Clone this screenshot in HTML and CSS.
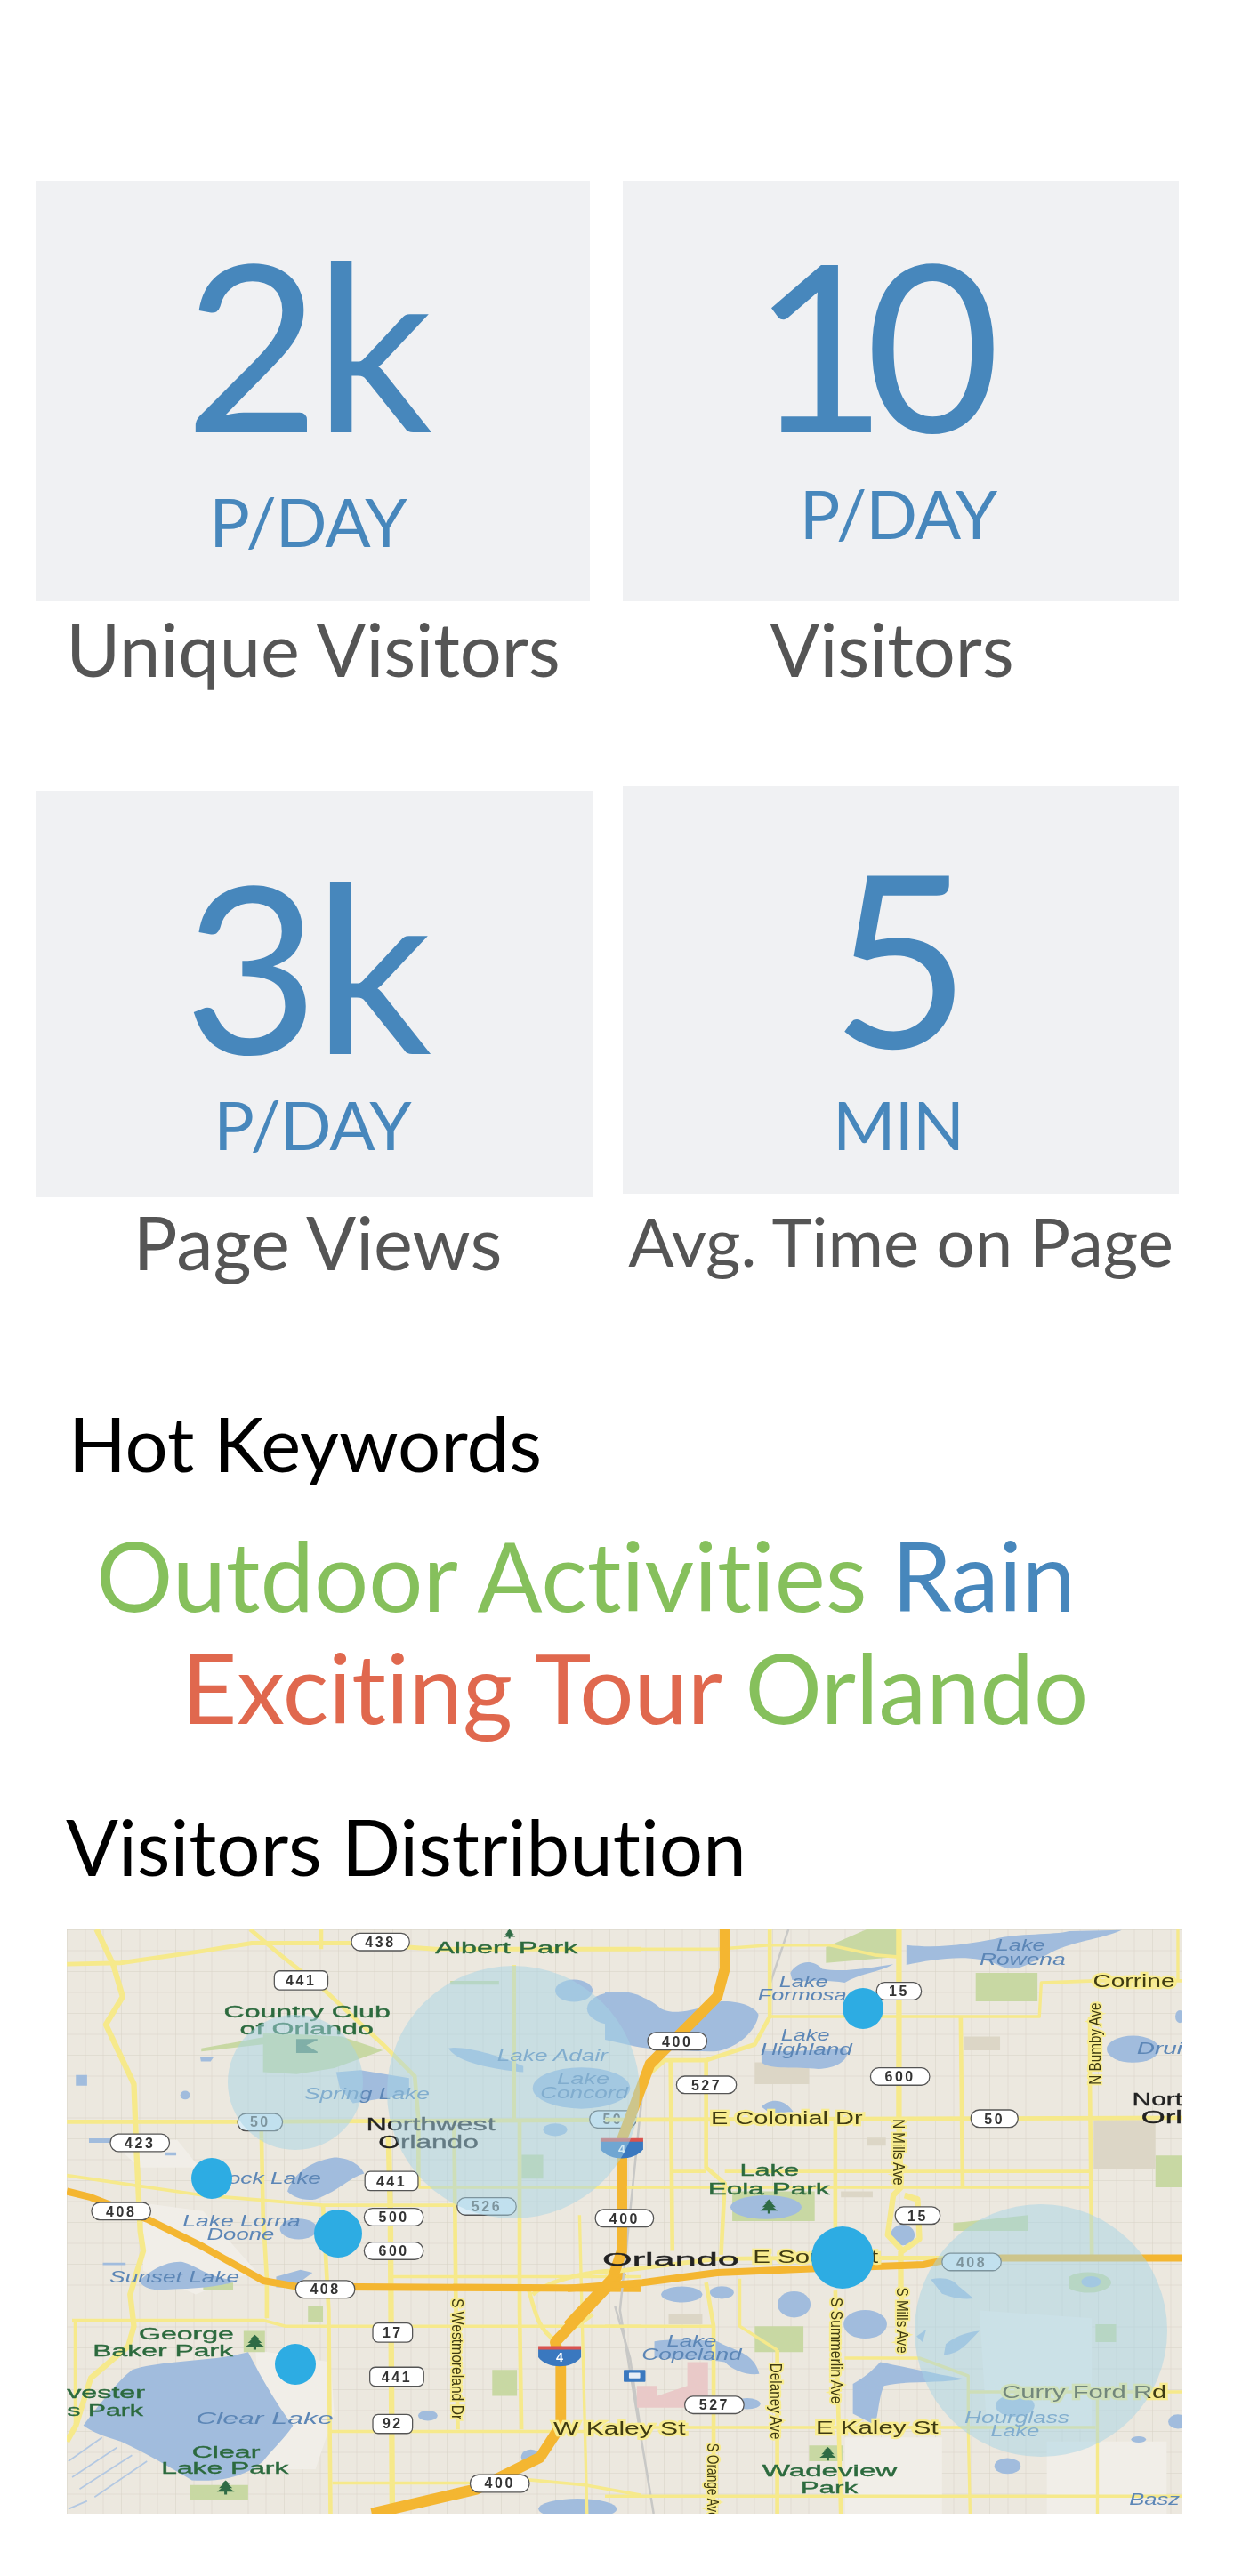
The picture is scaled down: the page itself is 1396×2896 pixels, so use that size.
FILE: index.html
```html
<!DOCTYPE html>
<html lang="en">
<head>
<meta charset="utf-8">
<title>Visitor statistics</title>
<link rel="stylesheet" href="styles.css">
</head>
<body>
<main class="page">
  <section class="stats stats-first">
    <article class="stat stat-a">
      <div class="card card-a">
        <div class="value value-two">2k</div>
        <div class="unit unit-a">P/DAY</div>
      </div>
      <p class="label">Unique Visitors</p>
    </article>
    <article class="stat stat-b">
      <div class="card card-a">
        <div class="value value-ten">10</div>
        <div class="unit unit-b">P/DAY</div>
      </div>
      <p class="label label-visitors">Visitors</p>
    </article>
  </section>
  <section class="stats stats-second">
    <article class="stat stat-c">
      <div class="card card-c">
        <div class="value value-three">3k</div>
        <div class="unit unit-c">P/DAY</div>
      </div>
      <p class="label label-views">Page Views</p>
    </article>
    <article class="stat stat-d">
      <div class="card card-d">
        <div class="value value-five">5</div>
        <div class="unit unit-min">MIN</div>
      </div>
      <p class="label label-time">Avg. Time on Page</p>
    </article>
  </section>
  <h2 class="heading heading-hot">Hot Keywords</h2>
  <div class="keywords">
    <p class="kw-line kw-one"><span class="green">Outdoor Activities</span> <span class="blue">Rain</span></p>
    <p class="kw-line kw-two"><span class="red">Exciting Tour</span> <span class="green">Orlando</span></p>
  </div>
  <h2 class="heading heading-dist">Visitors Distribution</h2>
  <div class="map">
    <svg class="map-svg" viewBox="0 0 1254 657" width="1254" height="657" role="img" aria-label="Map of Orlando with visitor circles">
      <defs>
        <pattern id="streets" width="61" height="47" patternUnits="userSpaceOnUse">
          <path class="grid" d="M0 .5H61M0 24H61M.5 0V47M21 0V47M41 0V47"/>
        </pattern>
        <symbol id="tree" viewBox="0 0 60 40" overflow="visible">
          <path class="tree" d="M30 0L42 10H37L50 22H42L56 32H34V40H26V32H4L18 22H10L23 10H18Z"/>
        </symbol>
        <g id="i4">
          <path class="i4-blue" d="M-57 -20H57V2C45 18 20 25 0 25C-20 25-45 18-57 2Z"/>
          <path class="i4-red" d="M-57 -26H57V-17H-57Z"/>
          <text class="i4-text" x="0" y="12">4</text>
        </g>
      </defs>
      <rect class="ground" width="1254" height="657"/>
      <rect class="street-grid" width="1254" height="657" fill="url(#streets)"/>

      <g class="map-base">
        <!-- west half -->
        <g transform="translate(-15 -18) scale(.4209 .4464)">
          <path class="pale" d="M240 730L400 750L540 900L380 960L240 900ZM540 1100L740 1130L750 1260L700 1400L560 1400ZM160 580L330 570L390 640L230 640Z"/>
          <path class="park" d="M560 300L770 310L880 345L750 390L650 405L560 400ZM395 340L560 312V330L395 348ZM508 1052H565V1105H508ZM365 1440H520V1478H365ZM1250 608H1308V668H1250ZM1172 1150H1238V1215H1172ZM400 930H480V950H400ZM680 990H720V1030H680ZM1060 170H1190V180H1060Z"/>
          <path class="lake" d="M80 1290C120 1240 170 1180 210 1150C280 1125 420 1130 520 1105C545 1150 590 1230 640 1290C620 1320 590 1345 560 1380C500 1430 420 1430 370 1428C320 1400 250 1360 180 1330C140 1320 100 1305 80 1290ZM625 700C640 660 680 625 750 615C790 615 820 635 830 655C790 665 770 695 700 720C670 725 640 715 625 700ZM230 925C260 900 300 875 345 878C390 890 405 915 490 925C440 945 350 945 290 948C260 950 235 940 230 925ZM755 400L820 395L950 415V455L800 478L765 440ZM1055 340C1090 330 1200 360 1255 385L1255 400C1200 395 1080 380 1055 340ZM60 407H90V434H60ZM392 362H428L420 373H394ZM95 567H158V578H95ZM297 602H328V610H297ZM595 915L660 898L692 905L640 942H595ZM132 880H193V886H132Z"/>
          <ellipse class="lake" cx="655" cy="795" rx="50" ry="26"/>
          <ellipse class="lake" cx="1410" cy="440" rx="130" ry="52"/>
          <ellipse class="lake" cx="1390" cy="195" rx="50" ry="28"/>
          <ellipse class="lake" cx="1510" cy="240" rx="85" ry="43"/>
          <ellipse class="lake" cx="1340" cy="545" rx="32" ry="16"/>
          <ellipse class="lake" cx="352" cy="458" rx="13" ry="11"/>
          <ellipse class="lake" cx="1000" cy="1265" rx="26" ry="13"/>
          <ellipse class="lake" cx="1400" cy="1500" rx="105" ry="26"/>
          <ellipse class="lake" cx="1275" cy="1370" rx="26" ry="20"/>
          <path class="swim" d="M40 1380L130 1320M50 1420L170 1345M70 1450L210 1365M110 1470L250 1380M40 1500L90 1480"/>
          <path class="road" d="M36 128L180 125L400 95L530 75L800 75L1020 90L1568 90"/>
          <path class="road-major" d="M115 40L160 130L185 210L140 280L215 430L222 600L232 800L240 850L205 960L215 1040L200 1090L100 1170L60 1290L36 1330"/>
          <path class="road" d="M525 40L600 100L720 190L880 330L965 410L975 520L975 690"/>
          <path class="road" d="M36 525H490L1568 520"/>
          <path class="road" d="M555 525L560 760L570 920L570 1020"/>
          <path class="road-thin" d="M36 660L400 710L720 735L1090 735"/>
          <path class="road-thin" d="M975 690H1568"/>
          <path class="road" d="M715 40V90M720 735L735 1000L740 1512"/>
          <path class="road-major" d="M895 560L900 760L905 1512"/>
          <path class="road" d="M1070 525L1075 1000L1080 1300M1245 525V1000L1250 1300M1230 130V520"/>
          <path class="road-thin" d="M50 1025H560L620 1040H1568M58 1030V1290M740 1305H1568M745 1435H1130M1250 1425L1420 1440L1568 1465M905 915H1568M1405 760L1425 1512"/>
          <path class="road" d="M1270 950C1290 1020 1300 1050 1340 1075M1440 1010C1400 1040 1360 1060 1340 1075M1280 960C1330 920 1440 900 1510 900"/>
          <path class="rail" d="M1500 990L1540 1120L1568 1300"/>
          <path class="hwy" d="M36 700L100 715L250 770L400 840L560 925L650 940L1568 945"/>
          <path class="hwy-wide" d="M1518 610V860"/>
          <path class="hwy-wide" d="M1520 900L1340 1080L1355 1130V1290L1300 1370L1130 1450L850 1512"/>
          <g class="lbl lbl-park">
            <text x="1020" y="100" textLength="380" lengthAdjust="spacingAndGlyphs">Albert Park</text>
            <text x="455" y="262" textLength="445" lengthAdjust="spacingAndGlyphs">Country Club</text>
            <text x="498" y="304" textLength="357" lengthAdjust="spacingAndGlyphs">of Orlando</text>
            <text x="228" y="1072" textLength="254" lengthAdjust="spacingAndGlyphs">George</text>
            <text x="105" y="1115" textLength="375" lengthAdjust="spacingAndGlyphs">Baker Park</text>
            <text x="36" y="1220" textLength="209" lengthAdjust="spacingAndGlyphs">vester</text>
            <text x="36" y="1265" textLength="204" lengthAdjust="spacingAndGlyphs">s Park</text>
            <text x="370" y="1370" textLength="182" lengthAdjust="spacingAndGlyphs">Clear</text>
            <text x="288" y="1412" textLength="340" lengthAdjust="spacingAndGlyphs">Lake Park</text>
          </g>
          <g class="lbl lbl-lake">
            <text x="670" y="468" textLength="335" lengthAdjust="spacingAndGlyphs">Spring Lake</text>
            <text x="1185" y="373" textLength="295" lengthAdjust="spacingAndGlyphs">Lake Adair</text>
            <text x="1345" y="430" textLength="140" lengthAdjust="spacingAndGlyphs">Lake</text>
            <text x="1300" y="467" textLength="235" lengthAdjust="spacingAndGlyphs">Concord</text>
            <text x="420" y="680" textLength="295" lengthAdjust="spacingAndGlyphs">Rock Lake</text>
            <text x="345" y="788" textLength="315" lengthAdjust="spacingAndGlyphs">Lake Lorna</text>
            <text x="410" y="822" textLength="180" lengthAdjust="spacingAndGlyphs">Doone</text>
            <text x="150" y="930" textLength="347" lengthAdjust="spacingAndGlyphs">Sunset Lake</text>
            <text x="380" y="1285" textLength="368" lengthAdjust="spacingAndGlyphs">Clear Lake</text>
          </g>
          <g class="lbl lbl-city">
            <text x="835" y="547" textLength="345" lengthAdjust="spacingAndGlyphs">Northwest</text>
            <text x="868" y="592" textLength="267" lengthAdjust="spacingAndGlyphs">Orlando</text>
          </g>
          <text class="lbl lbl-road" transform="translate(1064 970) rotate(90)" textLength="305" lengthAdjust="spacingAndGlyphs">S Westmoreland Dr</text>
          <use href="#tree" x="1190" y="40" width="56" height="24"/>
          <use href="#tree" x="510" y="1060" width="56" height="40"/>
          <use href="#tree" x="432" y="1428" width="56" height="36"/>
          <path class="flag" d="M650 318H705L672 332L705 350H650ZM665 325V345"/>
          <g class="shield"><rect x="796" y="50" width="155" height="44" rx="22"/><text x="873" y="85">438</text></g>
          <g class="shield"><rect x="590" y="145" width="143" height="48" rx="14"/><text x="661" y="182">441</text></g>
          <g class="shield shield-blue"><rect x="492" y="504" width="120" height="44" rx="22"/><text x="552" y="538">50</text></g>
          <g class="shield"><rect x="152" y="556" width="158" height="44" rx="22"/><text x="231" y="591">423</text></g>
          <g class="shield"><rect x="102" y="728" width="158" height="44" rx="22"/><text x="181" y="763">408</text></g>
          <g class="shield"><rect x="832" y="650" width="142" height="48" rx="14"/><text x="903" y="687">441</text></g>
          <g class="shield"><rect x="830" y="743" width="158" height="44" rx="22"/><text x="909" y="778">500</text></g>
          <g class="shield"><rect x="830" y="828" width="158" height="44" rx="22"/><text x="909" y="863">600</text></g>
          <g class="shield shield-blue"><rect x="1078" y="716" width="158" height="44" rx="22"/><text x="1157" y="751">526</text></g>
          <g class="shield"><rect x="647" y="925" width="158" height="44" rx="22"/><text x="726" y="959">408</text></g>
          <g class="shield"><rect x="853" y="1032" width="106" height="48" rx="14"/><text x="906" y="1069">17</text></g>
          <g class="shield"><rect x="845" y="1143" width="144" height="48" rx="14"/><text x="917" y="1180">441</text></g>
          <g class="shield"><rect x="853" y="1262" width="106" height="48" rx="14"/><text x="906" y="1298">92</text></g>
          <g class="shield"><rect x="1113" y="1414" width="158" height="44" rx="22"/><text x="1192" y="1448">400</text></g>
          <g class="shield shield-blue"><rect x="1432" y="497" width="124" height="44" rx="22"/><text x="1494" y="531">50</text></g>
          <use href="#i4" x="1352" y="1116"/>
        </g>

        <!-- east half -->
        <g transform="translate(605 -18) scale(.4209 .4464)">
          <path class="pale" d="M1000 1000L1300 1020V1300H1020ZM1180 1330H1500V1512H1180ZM640 1320H900V1512H640Z"/>
          <path class="park" d="M590 85L700 40H780V110L590 125ZM990 150H1155V222H990ZM1470 610H1542V690H1470ZM545 1340H635V1380H545ZM400 1040H530V1105H400ZM340 700H560V775H340ZM930 780L1130 760V800L930 800ZM1310 1035H1365V1080H1310ZM1240 915A60 25 0 0 1 1340 915A60 25 0 0 1 1240 945Z"/>
          <path class="tan" d="M1305 520H1470V645H1305ZM960 310H1055V345H960ZM400 375H545V430H400ZM700 565H750V585H700ZM630 700H715V715H630ZM170 1010H260V1035H170Z"/>
          <path class="pink" d="M85 1190H140V1215L220 1190V1130H275V1245H85Z"/>
          <path class="lake" d="M805 80C900 90 980 75 1040 65C1100 50 1200 55 1240 45L1380 42C1330 65 1240 70 1180 105C1130 125 1100 155 1050 130C980 100 880 115 805 130ZM495 150C510 125 550 110 580 140C640 150 720 135 770 128C730 150 680 150 640 175C590 165 530 175 500 168ZM0 197C60 200 110 205 150 240C190 260 250 240 310 222C360 220 400 235 410 255C405 300 340 350 280 348C210 345 130 345 80 335L0 318ZM418 345C480 350 570 345 640 338C660 360 630 390 570 392C510 385 440 395 418 375ZM418 487C440 465 480 465 503 500L440 503ZM132 1078C180 1070 260 1075 300 1078C340 1100 400 1105 412 1160C380 1165 340 1150 320 1130C260 1120 180 1125 132 1118ZM662 1185C690 1170 710 1155 735 1130C790 1140 880 1160 958 1172C900 1185 810 1175 745 1190C730 1220 730 1270 720 1288L662 1260ZM870 922C900 915 930 920 945 940C960 950 975 965 985 970C940 975 910 960 900 958ZM910 1085C930 1070 960 1055 1000 1052C970 1080 950 1110 905 1112ZM832 1065L858 1048L848 1080Z"/>
          <ellipse class="lake" cx="430" cy="740" rx="95" ry="30"/>
          <ellipse class="lake" cx="795" cy="810" rx="32" ry="26"/>
          <ellipse class="lake" cx="205" cy="960" rx="55" ry="20"/>
          <ellipse class="lake" cx="312" cy="955" rx="32" ry="16"/>
          <ellipse class="lake" cx="505" cy="985" rx="44" ry="33"/>
          <ellipse class="lake" cx="695" cy="1035" rx="58" ry="36"/>
          <ellipse class="lake" cx="1095" cy="1240" rx="52" ry="28"/>
          <ellipse class="lake" cx="1075" cy="1392" rx="35" ry="20"/>
          <ellipse class="lake" cx="1425" cy="1325" rx="20" ry="8"/>
          <ellipse class="lake" cx="1530" cy="1280" rx="26" ry="18"/>
          <ellipse class="lake" cx="1410" cy="342" rx="70" ry="34"/>
          <ellipse class="lake" cx="1535" cy="260" rx="12" ry="16"/>
          <ellipse class="lake" cx="1298" cy="928" rx="26" ry="14"/>
          <ellipse class="lake" cx="380" cy="1235" rx="35" ry="14"/>
          <path class="rail" d="M100 450L40 1000L130 1512M490 40L440 180"/>
          <path class="road" d="M440 40V260L400 330L270 370H160L100 420"/>
          <path class="road-thin" d="M0 90H300L440 80H600L720 105L785 110"/>
          <path class="road-major" d="M785 40V520L790 690L770 710L755 810L795 850L840 820L835 720L800 710M790 850V950L800 1100"/>
          <path class="road-thin" d="M440 260H1160L1165 175L1310 170H1542"/>
          <path class="road" d="M0 520L1542 515"/>
          <path class="road" d="M175 370L180 850M270 370V640L320 680L310 860M615 520V800M950 260L955 690M1295 260V430L1300 860"/>
          <path class="road-thin" d="M180 650H270M320 650H1295M0 690H1295"/>
          <path class="road-thin" d="M0 1040H290M360 920V1040L460 1100M1530 40V170"/>
          <path class="road" d="M270 930L290 1040V1512M460 1100V1512M615 950L630 1512"/>
          <path class="road-thin" d="M0 1295H1310M640 1120H840L970 1165V1295L975 1512M970 1205H1542M1315 1205V1512M0 1468H1542"/>
          <path class="road" d="M0 905L300 870L550 868M730 868H1000"/>
          <path class="hwy-wide" d="M320 40V140L300 210L120 380L45 570V850L20 920L-100 1040"/>
          <path class="hwy" d="M-100 945L100 930L300 905L550 895L850 885L900 875L1060 868H1542"/>
          <g class="lbl lbl-park">
            <text x="360" y="660" textLength="158" lengthAdjust="spacingAndGlyphs">Lake</text>
            <text x="275" y="707" textLength="325" lengthAdjust="spacingAndGlyphs">Eola Park</text>
            <text x="420" y="1417" textLength="360" lengthAdjust="spacingAndGlyphs">Wadeview</text>
            <text x="522" y="1460" textLength="153" lengthAdjust="spacingAndGlyphs">Park</text>
          </g>
          <g class="lbl lbl-lake">
            <text x="465" y="185" textLength="130" lengthAdjust="spacingAndGlyphs">Lake</text>
            <text x="408" y="220" textLength="237" lengthAdjust="spacingAndGlyphs">Formosa</text>
            <text x="1045" y="95" textLength="130" lengthAdjust="spacingAndGlyphs">Lake</text>
            <text x="1000" y="130" textLength="230" lengthAdjust="spacingAndGlyphs">Rowena</text>
            <text x="470" y="320" textLength="130" lengthAdjust="spacingAndGlyphs">Lake</text>
            <text x="415" y="356" textLength="245" lengthAdjust="spacingAndGlyphs">Highland</text>
            <text x="165" y="1090" textLength="133" lengthAdjust="spacingAndGlyphs">Lake</text>
            <text x="98" y="1124" textLength="267" lengthAdjust="spacingAndGlyphs">Copeland</text>
            <text x="960" y="1283" textLength="280" lengthAdjust="spacingAndGlyphs">Hourglass</text>
            <text x="1030" y="1317" textLength="130" lengthAdjust="spacingAndGlyphs">Lake</text>
            <text x="1420" y="355" textLength="122" lengthAdjust="spacingAndGlyphs">Drui</text>
            <text x="1400" y="1490" textLength="135" lengthAdjust="spacingAndGlyphs">Basz</text>
          </g>
          <g class="lbl lbl-city">
            <text x="-7" y="888" textLength="365" lengthAdjust="spacingAndGlyphs">Orlando</text>
            <text x="1408" y="485" textLength="134" lengthAdjust="spacingAndGlyphs">Nort</text>
            <text x="1432" y="528" textLength="110" lengthAdjust="spacingAndGlyphs">Orl</text>
          </g>
          <g class="lbl lbl-road">
            <text x="-138" y="1312" textLength="353" lengthAdjust="spacingAndGlyphs">W Kaley St</text>
            <text x="1303" y="185" textLength="219" lengthAdjust="spacingAndGlyphs">Corrine</text>
            <text x="283" y="532" textLength="405" lengthAdjust="spacingAndGlyphs">E Colonial Dr</text>
            <text x="395" y="880" textLength="335" lengthAdjust="spacingAndGlyphs">E South St</text>
            <text x="563" y="1310" textLength="327" lengthAdjust="spacingAndGlyphs">E Kaley St</text>
            <text x="1060" y="1220" textLength="440" lengthAdjust="spacingAndGlyphs">Curry Ford Rd</text>
            <text transform="translate(1324 432) rotate(-90)" textLength="207" lengthAdjust="spacingAndGlyphs">N Bumby Ave</text>
            <text transform="translate(769 518) rotate(90)" textLength="167" lengthAdjust="spacingAndGlyphs">N Mills Ave</text>
            <text transform="translate(604 968) rotate(90)" textLength="267" lengthAdjust="spacingAndGlyphs">S Summerlin Ave</text>
            <text transform="translate(780 942) rotate(90)" textLength="166" lengthAdjust="spacingAndGlyphs">S Mills Ave</text>
            <text transform="translate(442 1133) rotate(90)" textLength="192" lengthAdjust="spacingAndGlyphs">Delaney Ave</text>
            <text transform="translate(274 1335) rotate(90)" textLength="190" lengthAdjust="spacingAndGlyphs">S Orange Ave</text>
          </g>
          <use href="#tree" x="408" y="720" width="60" height="36"/>
          <use href="#tree" x="565" y="1344" width="60" height="34"/>
          <rect class="bus" x="50" y="1150" width="58" height="30" rx="2"/>
          <rect class="bus-window" x="64" y="1157" width="30" height="14" rx="2"/>
          <g class="shield"><rect x="725" y="174" width="120" height="44" rx="22"/><text x="785" y="209">15</text></g>
          <g class="shield"><rect x="114" y="300" width="158" height="44" rx="22"/><text x="193" y="335">400</text></g>
          <g class="shield"><rect x="709" y="389" width="158" height="44" rx="22"/><text x="788" y="423">600</text></g>
          <g class="shield"><rect x="191" y="410" width="160" height="44" rx="22"/><text x="271" y="445">527</text></g>
          <g class="shield"><rect x="977" y="495" width="126" height="44" rx="22"/><text x="1040" y="530">50</text></g>
          <g class="shield"><rect x="775" y="739" width="120" height="44" rx="22"/><text x="835" y="774">15</text></g>
          <g class="shield"><rect x="-26" y="746" width="156" height="44" rx="22"/><text x="52" y="781">400</text></g>
          <g class="shield shield-blue"><rect x="900" y="856" width="158" height="44" rx="22"/><text x="979" y="891">408</text></g>
          <g class="shield"><rect x="213" y="1216" width="158" height="44" rx="22"/><text x="292" y="1251">527</text></g>
          <use href="#i4" x="45" y="592"/>
        </g>
      </g>

      <circle class="zone" cx="257" cy="172" r="76"/>
      <circle class="zone" cx="502" cy="183" r="142"/>
      <circle class="zone" cx="1095" cy="451" r="142"/>
      <circle class="dot" cx="163" cy="280" r="23"/>
      <circle class="dot" cx="305" cy="342" r="27"/>
      <circle class="dot" cx="257" cy="489" r="23"/>
      <circle class="dot" cx="895" cy="89" r="23"/>
      <circle class="dot" cx="872" cy="369" r="35"/>
    </svg>
  </div>
</main>
</body>
</html>
```

FILE: styles.css
```css
* { box-sizing: border-box; }
html, body { margin: 0; padding: 0; background: #fff; }
body { font-family: "Lato", "Noto Sans", sans-serif; font-variant-ligatures: none; }
.page { width: 1396px; height: 2896px; padding-top: 203px; overflow: hidden; }

.stats { display: flex; gap: 37px; padding-left: 41px; }
.stats-first { height: 681px; }
.stats-second { align-items: flex-start; }

.stat-a { width: 622px; }
.stat-b { width: 625px; }
.stat-c { width: 626px; padding-top: 5px; margin-right: -4px; }
.stat-d { width: 625px; }

.card { background: #f0f1f3; color: #4787bc; text-align: center; padding-top: 51px; }
.card-a { height: 473px; }
.card-c { height: 457px; padding-top: 64px; }
.card-d { height: 458px; padding-top: 59px; }

.value { font-size: 262px; line-height: 262px; letter-spacing: -6px; }
.value-two { padding-right: 16px; }
.value-ten { letter-spacing: -25px; padding-right: 80px; }
.value-three { padding-right: 22px; }
.value-five { letter-spacing: 0; font-size: 270px; }
.unit { font-size: 76px; line-height: 76px; margin-top: 32px; letter-spacing: -1px; }
.unit-a { padding-right: 12px; }
.unit-b { margin-top: 23px; padding-right: 6px; }
.unit-c { margin-top: 11px; padding-right: 6px; }
.unit-min { margin-top: 21px; padding-right: 6px; }

.label { margin: 13px 0 0; color: #555; font-size: 83px; line-height: 80px; text-align: center; white-space: nowrap; }
.label-visitors { padding-right: 20px; }
.label-views { margin-top: 10px; padding-left: 6px; }
.label-time { margin-top: 13px; font-size: 76px; }

.heading { margin: 0; font-weight: 400; color: #000; font-size: 85px; line-height: 84px; white-space: nowrap; }
.heading-hot { margin-top: 144px; padding-left: 77px; }
.heading-dist { margin-top: 75px; padding-left: 74px; font-size: 87px; }

.keywords { margin-top: 43px; }
.kw-line { margin: 0; font-size: 108px; line-height: 126px; white-space: nowrap; }
.kw-one { padding-left: 108px; }
.kw-two { padding-left: 204px; }
.green { color: #86c05c; }
.blue { color: #4787bc; }
.red { color: #e0684e; }

.map { margin: 51px 0 0 75px; width: 1254px; height: 657px; }
.map-svg { display: block; }
.ground { fill: #ece8df; }
.grid { fill: none; stroke: #d9d3c7; stroke-width: 1; opacity: .55; }
.map-base { filter: blur(.5px); }
.pale { fill: #f1eee8; }
.park { fill: #c8d8a3; }
.tan { fill: #dcd6c6; }
.pink { fill: #e9c9c8; }
.lake { fill: #a1bcdd; }
.swim { fill: none; stroke: #b3c8e2; stroke-width: 4; }
.road, .road-major, .road-thin, .hwy, .hwy-wide, .rail { fill: none; stroke-linejoin: round; }
.road { stroke: #f6e98b; stroke-width: 11; }
.road-major { stroke: #f6e98b; stroke-width: 15; }
.road-thin { stroke: #f6e98b; stroke-width: 8; }
.hwy { stroke: #f4b631; stroke-width: 18; }
.hwy-wide { stroke: #f4b631; stroke-width: 28; }
.rail { stroke: #c8c8c6; stroke-width: 6; }
.tree { fill: #2f6b45; }
.flag { fill: #5a8a6a; stroke: #5a8a6a; stroke-width: 3; }
.bus { fill: #3a78bf; }
.bus-window { fill: #e8eef6; }

.lbl { font-family: "Liberation Sans", sans-serif; font-size: 42px; }
.lbl-park { fill: #2c6a3e; stroke: #2c6a3e; stroke-width: .8px; }
.lbl-lake { fill: #5c86b6; font-style: italic; }
.lbl-city { fill: #222; font-size: 46px; stroke: #222; stroke-width: .8px; }
.lbl-road { fill: #3f3b12; stroke: #f8ec8f; stroke-width: 10px; paint-order: stroke; font-size: 44px; }

.shield rect { fill: #fff; stroke: #555; stroke-width: 3; }
.shield text { fill: #333; font-family: "Liberation Sans", sans-serif; font-size: 38px; font-weight: 700; text-anchor: middle; letter-spacing: 6px; }
.shield-blue rect { fill: #dcedf6; }
.shield-blue text { fill: #555; }
.i4-blue { fill: #3a78bf; }
.i4-red { fill: #d9534f; }
.i4-text { fill: #fff; font-family: "Liberation Sans", sans-serif; font-size: 34px; font-weight: 700; text-anchor: middle; }

.zone { fill: #a5d3e6; opacity: .5; }
.dot { fill: #2dace3; }
```
